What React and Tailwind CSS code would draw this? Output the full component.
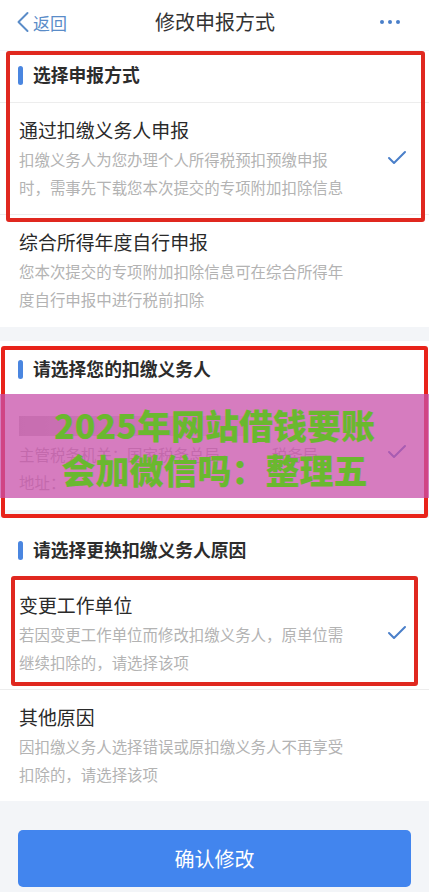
import { Check, ChevronLeft } from "lucide-react";

const cjk = { fontFamily: '"Noto Sans CJK SC", "Liberation Sans", sans-serif' };

function SectionTitle({ text, className = "" }) {
  return (
    <div className={`flex items-center pl-[18px] ${className}`}>
      <span className="w-[5px] h-[19px] rounded-full bg-[#4a86e0] mr-[10px]" />
      <span className="text-[17.8px] font-semibold text-[#2c2c2c] leading-none">{text}</span>
    </div>
  );
}

function Option({ title, lines, checked, border, height = "h-[112px]" }) {
  return (
    <div className={`relative ${height} pl-[19px] pt-[13px] ${border ? "border-b border-[#ededed]" : ""}`}>
      <div className="text-[18.9px] leading-[28px] mb-[1px] text-[#2a2a2a]">{title}</div>
      {lines.map((l) => (
        <div key={l} className="text-[15.45px] leading-[28px] text-[#b3b3b3] whitespace-nowrap">{l}</div>
      ))}
      {checked && (
        <Check className="absolute right-[20px] top-[43px] text-[#4a7fc9]" size={24} strokeWidth={2} />
      )}
    </div>
  );
}

export default function App() {
  return (
    <div className="relative w-[429px] h-[892px] overflow-hidden bg-[#f3f5f8]" style={cjk}>
      {/* nav */}
      <div className="h-[50px] pb-[6px] bg-white flex items-center justify-between pl-[5px] pr-[29px]">
        <div className="flex items-center w-[80px] text-[#5a8cc8]">
          <ChevronLeft size={36} strokeWidth={1.3} className="-mr-[8px]" />
          <span className="text-[17px] leading-none">返回</span>
        </div>
        <div className="text-[20px] leading-none text-[#333]">修改申报方式</div>
        <div className="flex w-[55px] justify-end gap-[4px]">
          <span className="w-[4px] h-[4px] rounded-full bg-[#4a7fc9]" />
          <span className="w-[4px] h-[4px] rounded-full bg-[#4a7fc9]" />
          <span className="w-[4px] h-[4px] rounded-full bg-[#4a7fc9]" />
        </div>
      </div>

      {/* 申报方式 */}
      <div className="mt-[1px] bg-white h-[276px]">
        <SectionTitle text="选择申报方式" className="h-[52px] pb-[3px] border-b border-[#ededed]" />
        <Option
          title="通过扣缴义务人申报"
          lines={["扣缴义务人为您办理个人所得税预扣预缴申报", "时，需事先下载您本次提交的专项附加扣除信息"]}
          checked
          border
        />
        <Option
          title="综合所得年度自行申报"
          lines={["您本次提交的专项附加扣除信息可在综合所得年", "度自行申报中进行税前扣除"]}
        />
      </div>

      {/* 扣缴义务人 */}
      <div className="mt-[14px] bg-white h-[169px]">
        <SectionTitle text="请选择您的扣缴义务人" className="h-[56px]" />
        <div className="relative pl-[19px] pt-[19px]">
          <div className="w-[226px] h-[20px] bg-gradient-to-r from-[#c4c4c4] to-[#e8e8e8]" />
          <div className="mt-[4px] text-[15.45px] leading-[28px] text-[#b3b3b3] whitespace-nowrap">
            主管税务机关：国家税务总局<span className="ml-[52px]">税务局</span>
          </div>
          <div className="text-[15.45px] leading-[28px] text-[#b3b3b3]">地址：</div>
          <Check className="absolute right-[20px] top-[43px] text-[#4a7fc9]" size={24} strokeWidth={2} />
        </div>
      </div>

      {/* 更换原因 */}
      <div className="mt-[8px] bg-white h-[283px]">
        <SectionTitle text="请选择更换扣缴义务人原因" className="h-[60px] pt-[4px]" />
        <Option
          title="变更工作单位"
          lines={["若因变更工作单位而修改扣缴义务人，原单位需", "继续扣除的，请选择该项"]}
          checked
          border
        />
        <Option
          title="其他原因"
          lines={["因扣缴义务人选择错误或原扣缴义务人不再享受", "扣除的，请选择该项"]}
          height="h-[111px]"
        />
      </div>

      {/* 按钮 */}
      <div className="mt-[29px] mx-[18px] h-[57px] rounded-[5px] bg-[#4285ee] flex items-center justify-center text-white text-[20px]">
        确认修改
      </div>

      {/* 红框标注 */}
      <div className="absolute left-[6px] top-[51px] w-[419px] h-[171px] rounded-[3px] border-[4px] border-[#e0281f]" />
      <div className="absolute left-[1px] top-[346px] w-[427px] h-[172px] rounded-[3px] border-[4px] border-[#e8231a]" />
      <div className="absolute left-[11px] top-[576px] w-[407px] h-[110px] rounded-[3px] border-[4px] border-[#e0281f]" />

      {/* 水印条 */}
      <div className="absolute left-0 top-[394px] w-full h-[104px] bg-[#c850aa]/75 flex flex-col items-center pt-[8px]">
        <div className="text-[34px] leading-[45px] font-black text-[#6ab82f] whitespace-nowrap">2025年网站借钱要账</div>
        <div className="text-[34px] leading-[45px] font-black text-[#6ab82f] whitespace-nowrap">会加微信吗：整理五</div>
      </div>
    </div>
  );
}
